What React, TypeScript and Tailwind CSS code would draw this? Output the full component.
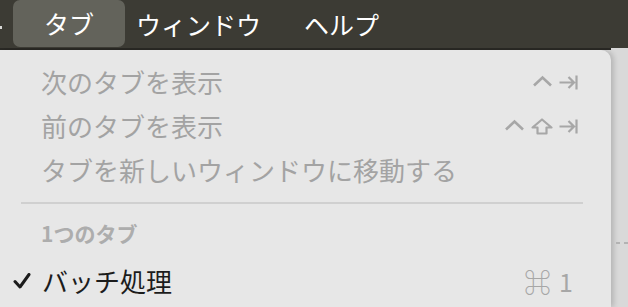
import React from "react";

const jp = { fontFamily: '"Noto Sans CJK JP", "Noto Sans", sans-serif' };

const Caret = () => (
  <svg width="21" height="14" viewBox="0 0 21 14" className="text-[#a7a7a7]">
    <path d="M2 10.5 L10.5 2.5 L19 10.5" fill="none" stroke="currentColor" strokeWidth="2.6" strokeLinejoin="miter" />
  </svg>
);

const Shift = () => (
  <svg width="22" height="17" viewBox="0 0 22 17" className="text-[#a7a7a7]">
    <path d="M11 1.5 L20.5 9.5 L15.5 9.5 L15.5 15.5 L6.5 15.5 L6.5 9.5 L1.5 9.5 Z" fill="none" stroke="currentColor" strokeWidth="2.2" strokeLinejoin="round" />
  </svg>
);

const TabKey = () => (
  <svg width="19" height="15" viewBox="0 0 19 15" className="text-[#a7a7a7]">
    <path d="M0.5 7.5 H15 M9.5 2 L15 7.5 L9.5 13 M17.5 0.5 V14.5" fill="none" stroke="currentColor" strokeWidth="2.2" />
  </svg>
);

const Check = () => (
  <svg width="18" height="16" viewBox="0 0 18 16" className="text-[#1c1c1c]">
    <path d="M2 8.5 L7 14 L16 1.5" fill="none" stroke="currentColor" strokeWidth="3" strokeLinecap="round" strokeLinejoin="round" />
  </svg>
);

const MenuRow: React.FC<{ label: string; shortcut?: React.ReactNode }> = ({ label, shortcut }) => (
  <div className="h-[44px] flex items-center justify-between pl-[41px] pr-[33px]">
    <span className="text-[26px] text-[#a3a3a3] leading-none" style={jp}>{label}</span>
    {shortcut && <div className="flex items-center gap-[6px]">{shortcut}</div>}
  </div>
);

export default function App() {
  return (
    <div className="w-[628px] h-[307px] overflow-hidden bg-[#d9d9d9] flex flex-col" style={jp}>
      {/* Menu bar */}
      <div className="h-[48px] bg-[#3c3b34] flex items-center relative shrink-0">
        <div className="absolute left-0 top-[26px] w-[2px] h-[3px] bg-white/80"></div>
        <div className="ml-[13px] w-[112px] h-[47px] self-start rounded-[7px] bg-[#63635b] flex items-center justify-center">
          <span className="text-[25px] text-white leading-none">タブ</span>
        </div>
        <span className="ml-[11px] text-[25px] text-white leading-none">ウィンドウ</span>
        <span className="ml-[43px] text-[25px] text-white leading-none">ヘルプ</span>
      </div>
      <div className="h-[2px] bg-[#2a2925] shrink-0 w-[611px]"></div>

      <div className="flex flex-1">
        {/* Dropdown panel */}
        <div className="w-[611px] bg-[#e7e7e7] rounded-tr-[10px] shadow-[3px_0_5px_rgba(0,0,0,0.16)] pt-[10px]">
          <MenuRow
            label="次のタブを表示"
            shortcut={<><Caret /><TabKey /></>}
          />
          <MenuRow
            label="前のタブを表示"
            shortcut={<><Caret /><Shift /><TabKey /></>}
          />
          <MenuRow label="タブを新しいウィンドウに移動する" />

          <div className="mt-[10px] mx-[21px] w-[562px] h-[2px] bg-[#d0d0d0]"></div>

          <div className="mt-[9px] h-[40px] flex items-center pl-[41px]">
            <span className="text-[21px] font-bold text-[#adadad] leading-none">1つのタブ</span>
          </div>

          <div className="mt-[6px] h-[44px] flex items-center justify-between pl-[13px] pr-[38px]">
            <div className="flex items-center gap-[11px]">
              <Check />
              <span className="text-[26px] text-[#1c1c1c] leading-none">バッチ処理</span>
            </div>
            <div className="flex items-center gap-[8px] text-[#a7a7a7] leading-none">
              <span className="text-[27px]">⌘</span>
              <span className="text-[25px]">1</span>
            </div>
          </div>
        </div>

        {/* Area behind the menu */}
        <div className="flex-1 relative">
          <div className="absolute top-[192px] left-[5px] flex gap-[4px]">
            <div className="w-[4px] h-[2px] bg-[#b3b3b3]"></div>
            <div className="w-[4px] h-[2px] bg-[#b3b3b3]"></div>
          </div>
        </div>
      </div>
    </div>
  );
}
